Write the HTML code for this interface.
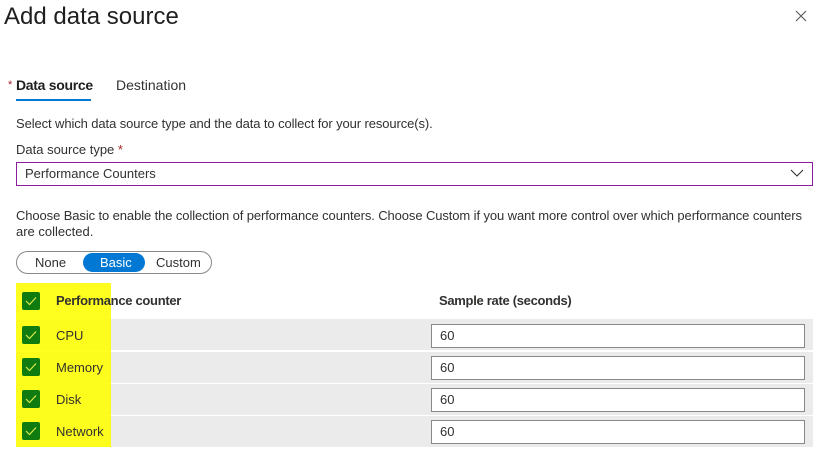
<!DOCTYPE html><html><head><style>
body{margin:0;width:818px;height:458px;background:#fff;font-family:"Liberation Sans",sans-serif;color:#323130;position:relative;overflow:hidden}
.a{position:absolute;white-space:nowrap}
.f13{font-size:13px}
.row{position:absolute;left:16px;width:797px;height:31px;background:#ebebeb}
.cb{position:absolute;left:22px;width:18px;height:18px;background:#107c10;border-radius:2px}
.cb svg{position:absolute;left:3px;top:3px}
.inp{position:absolute;left:431px;width:364px;height:22px;border:1px solid #8a8886;background:#fff;font-size:13px;line-height:22px;padding-left:8px}
</style></head><body>
<div class="a" style="left:4px;top:3px;font-size:24px;color:#201f1e">Add data source</div>
<svg class="a" style="left:795px;top:10px" width="12" height="12"><path d="M1 1L11 11M11 1L1 11" stroke="#605e5c" stroke-width="1.2"/></svg>
<div class="a" style="left:8px;top:79px;font-size:11px;color:#a4262c">*</div>
<div class="a" style="left:16px;top:77px;font-size:14px;color:#201f1e;font-weight:600;letter-spacing:-0.3px">Data source</div>
<div class="a" style="left:16px;top:99px;width:75px;height:2px;background:#0078d4"></div>
<div class="a" style="left:116px;top:77px;font-size:14px">Destination</div>
<div class="a f13" style="left:16px;top:116px;letter-spacing:-0.1px">Select which data source type and the data to collect for your resource(s).</div>
<div class="a f13" style="left:16px;top:142px">Data source type <span style="color:#a4262c">*</span></div>
<div class="a" style="left:16px;top:162px;width:795px;height:22px;border:1px solid #8a1e9c;"></div>
<div class="a f13" style="left:25px;top:166px">Performance Counters</div>
<svg class="a" style="left:790px;top:168px" width="14" height="10"><path d="M1 2L7 8L13 2" stroke="#323130" fill="none" stroke-width="1.1"/></svg>
<div class="a f13" style="left:16px;top:208px;letter-spacing:-0.1px">Choose Basic to enable the collection of performance counters. Choose Custom if you want more control over which performance counters</div>
<div class="a f13" style="left:16px;top:224px">are collected.</div>
<div class="a" style="left:16px;top:251px;width:194px;height:21px;border:1px solid #8a8886;border-radius:12px"></div>
<div class="a" style="left:83px;top:253px;width:62px;height:19px;background:#0078d4;border-radius:10px"></div>
<div class="a f13" style="left:35px;top:255px">None</div>
<div class="a f13" style="left:100px;top:255px;color:#fff">Basic</div>
<div class="a f13" style="left:156px;top:255px">Custom</div>
<div class="row" style="top:319px"></div>
<div class="row" style="top:352px"></div>
<div class="row" style="top:384px"></div>
<div class="row" style="top:416px"></div>
<div class="a" style="left:16px;top:283px;width:95px;height:164px;background:rgba(255,255,0,0.88)"></div>
<div class="a f13" style="left:56px;top:293px;font-weight:600;letter-spacing:-0.3px">Performance counter</div>
<div class="a f13" style="left:439px;top:293px;font-weight:600;letter-spacing:-0.3px">Sample rate (seconds)</div>
<div class="cb" style="top:292px"><svg width="12" height="12"><path d="M1 6L4.5 9.5L11 2.5" stroke="#d8e84c" fill="none" stroke-width="1.2"/></svg></div>
<div class="cb" style="top:326px"><svg width="12" height="12"><path d="M1 6L4.5 9.5L11 2.5" stroke="#d8e84c" fill="none" stroke-width="1.2"/></svg></div>
<div class="cb" style="top:358px"><svg width="12" height="12"><path d="M1 6L4.5 9.5L11 2.5" stroke="#d8e84c" fill="none" stroke-width="1.2"/></svg></div>
<div class="cb" style="top:390px"><svg width="12" height="12"><path d="M1 6L4.5 9.5L11 2.5" stroke="#d8e84c" fill="none" stroke-width="1.2"/></svg></div>
<div class="cb" style="top:422px"><svg width="12" height="12"><path d="M1 6L4.5 9.5L11 2.5" stroke="#d8e84c" fill="none" stroke-width="1.2"/></svg></div>
<div class="a f13" style="left:56px;top:328px">CPU</div>
<div class="a f13" style="left:56px;top:360px">Memory</div>
<div class="a f13" style="left:56px;top:392px">Disk</div>
<div class="a f13" style="left:56px;top:424px">Network</div>
<div class="inp" style="top:324px">60</div>
<div class="inp" style="top:356px">60</div>
<div class="inp" style="top:388px">60</div>
<div class="inp" style="top:420px">60</div>
</body></html>
